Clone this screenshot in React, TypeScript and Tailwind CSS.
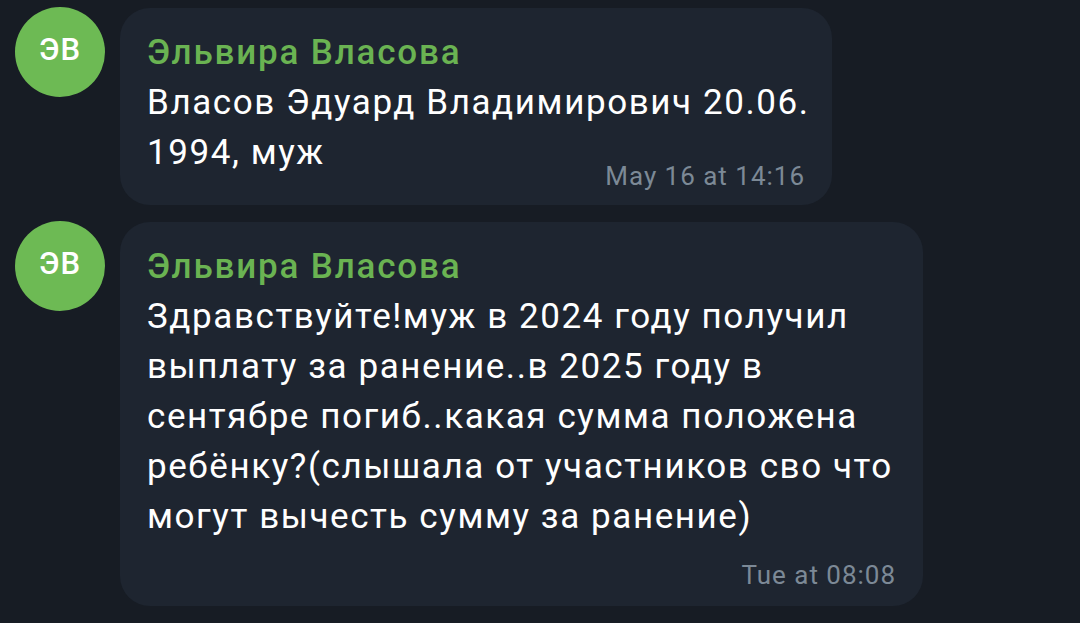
import React from 'react'

const font = { fontFamily: 'Roboto, "Noto Sans", sans-serif' }

function Avatar() {
  return (
    <div className="w-[90px] h-[90px] shrink-0 rounded-full bg-[#6dba54] flex items-center justify-center text-white text-[31px] font-medium tracking-[0.03em] pb-[4px]">
      ЭВ
    </div>
  )
}

export default function App() {
  return (
    <div className="w-[1080px] h-[623px] bg-[#171c24] overflow-hidden pt-[8px]" style={font}>
      {/* first message */}
      <div className="flex items-start gap-[15px] pl-[15px]">
        <div className="-mt-[1px]">
          <Avatar />
        </div>
        <div className="w-[712px] rounded-[30px] bg-[#1e2530] pt-[20px] pl-[27px] pr-[27px] pb-[14px]">
          <div className="text-[#6ab352] text-[35px] font-medium leading-[50px] tracking-[0.052em]">Эльвира Власова</div>
          <div className="text-white text-[35px] leading-[50px] tracking-[0.045em] whitespace-nowrap">Власов Эдуард Владимирович 20.06.</div>
          <div className="flex items-start justify-between">
            <div className="text-white text-[35px] leading-[50px] tracking-[0.045em]">1994, муж</div>
            <div className="mt-[33px] text-[#7c8996] text-[26px] leading-[30px] tracking-[0.038em]">May 16 at 14:16</div>
          </div>
        </div>
      </div>

      {/* second message */}
      <div className="flex items-start gap-[15px] pl-[15px] mt-[17px]">
        <div className="-mt-[1px]">
          <Avatar />
        </div>
        <div className="w-[803px] rounded-[30px] bg-[#1e2530] pt-[20px] pl-[27px] pr-[27px] pb-[16px]">
          <div className="text-[#6ab352] text-[35px] font-medium leading-[50px] tracking-[0.052em]">Эльвира Власова</div>
          <div className="text-white text-[35px] leading-[50px] tracking-[0.045em] whitespace-nowrap">
            <div>Здравствуйте!муж в 2024 году получил</div>
            <div>выплату за ранение..в 2025 году в</div>
            <div>сентябре погиб..какая сумма положена</div>
            <div>ребёнку?(слышала от участников сво что</div>
            <div>могут вычесть сумму за ранение)</div>
          </div>
          <div className="mt-[18px] text-right text-[#7c8996] text-[26px] leading-[30px] tracking-[0.038em]">Tue at 08:08</div>
        </div>
      </div>
    </div>
  )
}
